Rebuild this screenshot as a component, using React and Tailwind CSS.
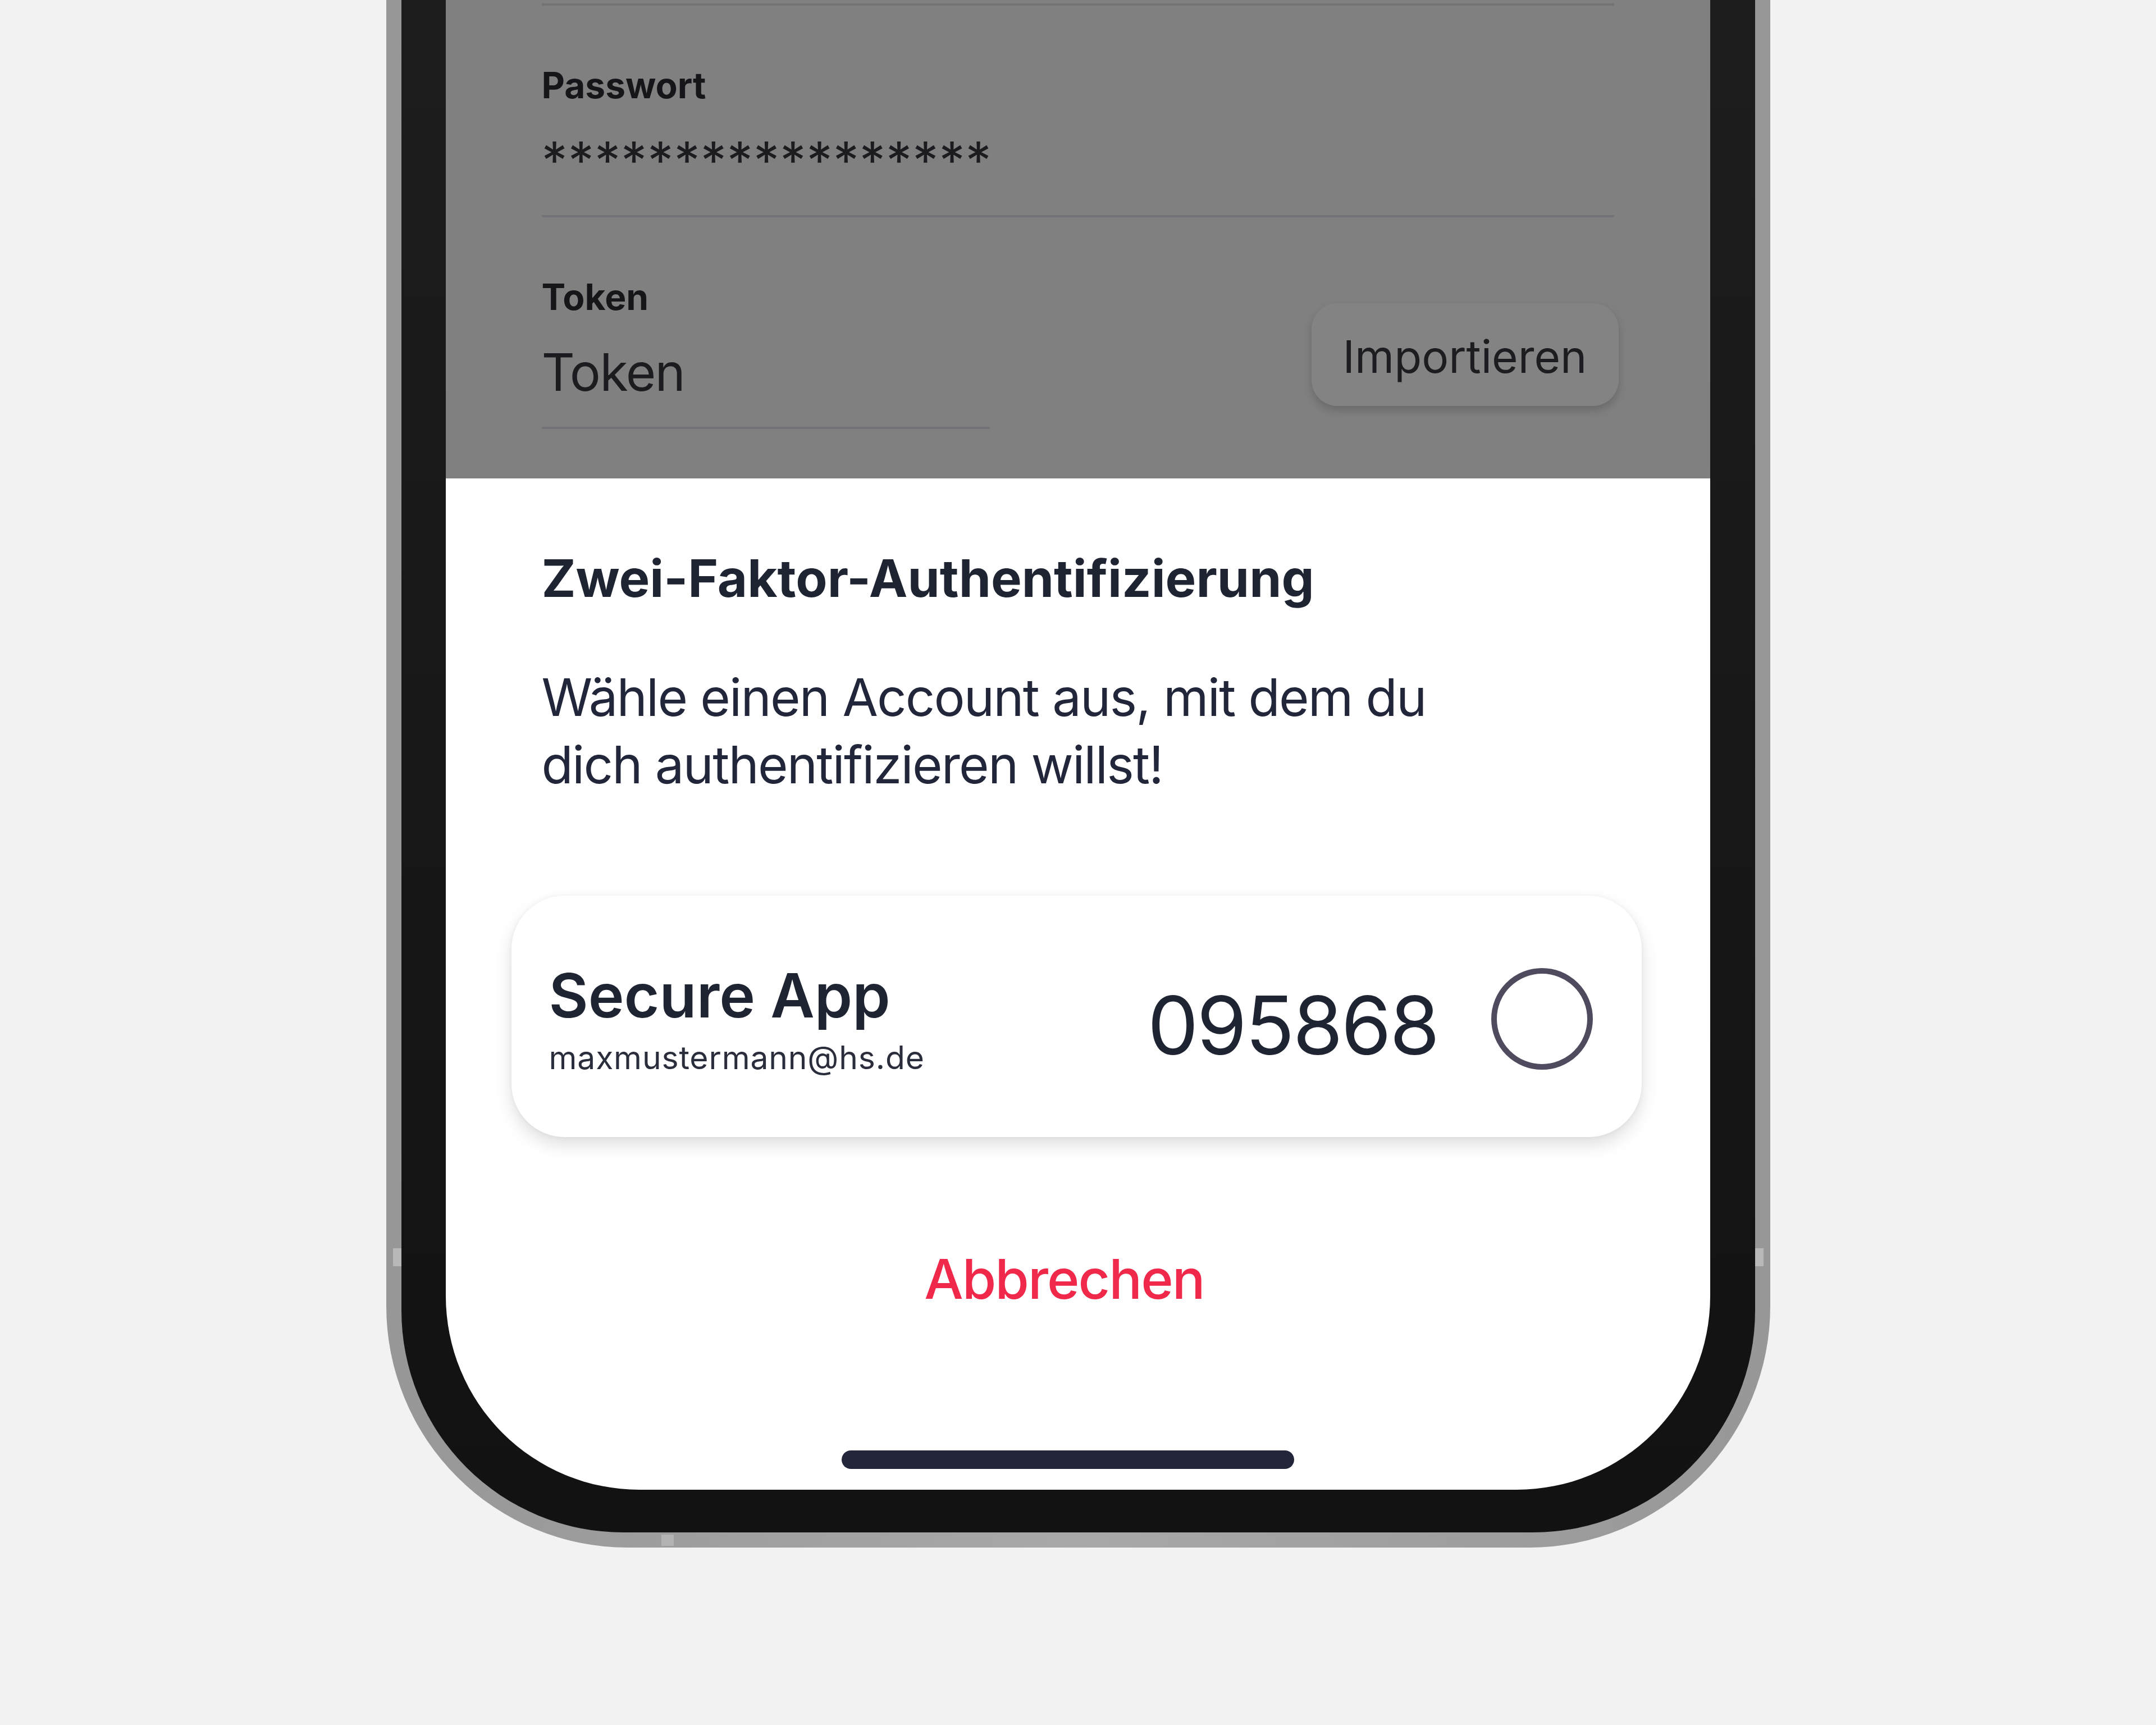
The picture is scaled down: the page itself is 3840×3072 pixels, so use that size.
import React from "react";

/* Field under the dimmed login form */
function Field({ label, value, valueClass = "" }) {
  return (
    <div>
      <div className="mt-[102px] text-[64px] leading-[80px] font-bold text-[#16161a]">{label}</div>
      <div className={`mt-[34px] text-[92px] leading-[120px] text-[#1c1c20] ${valueClass}`}>{value}</div>
      <div className="mt-[37px] h-[4px] bg-[#737377]" />
    </div>
  );
}

export default function App() {
  return (
    <div className="w-[3840px] h-[3072px] bg-[#f2f2f2] flex justify-center overflow-hidden font-['Inter','Noto_Sans',sans-serif]">
      {/* phone body */}
      <div className="relative w-[2465px] h-[2756px] bg-gradient-to-r from-[#979797] via-[#a8a8a8] to-[#979797] px-[27px] pb-[27px] rounded-b-[430px]">
        {/* antenna bands */}
        <div className="absolute left-[12px] top-[2223px] w-[15px] h-[32px] bg-[#b8b8b8]" />
        <div className="absolute right-[12px] top-[2223px] w-[15px] h-[32px] bg-[#b8b8b8]" />
        <div className="absolute left-[490px] bottom-[3px] w-[22px] h-[20px] bg-[#b3b3b3]" />

        <div className="h-full bg-gradient-to-b from-[#1d1d1d] to-[#121212] pl-[79px] pr-[80px] pb-[76px] rounded-b-[395px]">
          <div className="h-full bg-white rounded-b-[345px] overflow-hidden flex flex-col">
            {/* dimmed form behind the sheet */}
            <div className="h-[852px] shrink-0 bg-[#808080] px-[171px] pt-[6px]">
              <div className="h-[4px] bg-[#737377]" />
              <Field label="Passwort" value="*****************" valueClass="tracking-[0.012em]" />
              <div className="flex justify-between items-start">
                <div className="w-[798px]">
                  <Field label="Token" value="Token" valueClass="tracking-[-0.02em]" />
                </div>
                <button className="mt-[153px] mr-[-8px] w-[547px] h-[183px] rounded-[46px] bg-[#838383] shadow-[0_8px_16px_rgba(0,0,0,0.18)] flex items-center justify-center pt-[6px] text-[80px] text-[#1d1d21]">
                  Importieren
                </button>
              </div>
            </div>

            {/* bottom sheet */}
            <div className="flex-1 flex flex-col px-[171px] text-[#1f2433]">
              <h2 className="mt-[123px] text-[92px] leading-[110px] font-bold">
                Zwei-Faktor-Authentifizierung
              </h2>
              <p className="mt-[97px] text-[92px] leading-[120px] tracking-[-0.02em] text-[#22263a]">
                Wähle einen Account aus, mit dem du
                <br />
                dich authentifizieren willst!
              </p>

              <div className="mt-[173px] ml-[-54px] mr-[-49px] h-[430px] shrink-0 rounded-[95px] bg-white shadow-[0_14px_30px_rgba(0,0,0,0.13),0_0_8px_rgba(0,0,0,0.05)] pl-[67px] pr-[87px] flex items-center">
                <div className="flex-1 pt-[6px]">
                  <div className="text-[108px] leading-[128px] font-semibold">Secure App</div>
                  <div className="mt-[13px] text-[57px] leading-[68px] tracking-[0.015em] text-[#2a2d3c]">maxmustermann@hs.de</div>
                </div>
                <div className="pt-[32px] text-[144px] leading-[144px] tracking-[-0.02em]">095868</div>
                <div className="ml-[94px] mt-[8px] w-[181px] h-[181px] rounded-full border-[10px] border-[#4f4a5e]" />
              </div>

              <div className="mt-[193px] pr-[48px] text-center text-[98px] leading-[120px] font-medium tracking-[-0.02em] text-[#f0284a]">
                Abbrechen
              </div>

              <div className="mt-auto mb-[37px] self-center mr-[35px] w-[806px] h-[33px] rounded-full bg-[#23263a]" />
            </div>
          </div>
        </div>
      </div>
    </div>
  );
}
